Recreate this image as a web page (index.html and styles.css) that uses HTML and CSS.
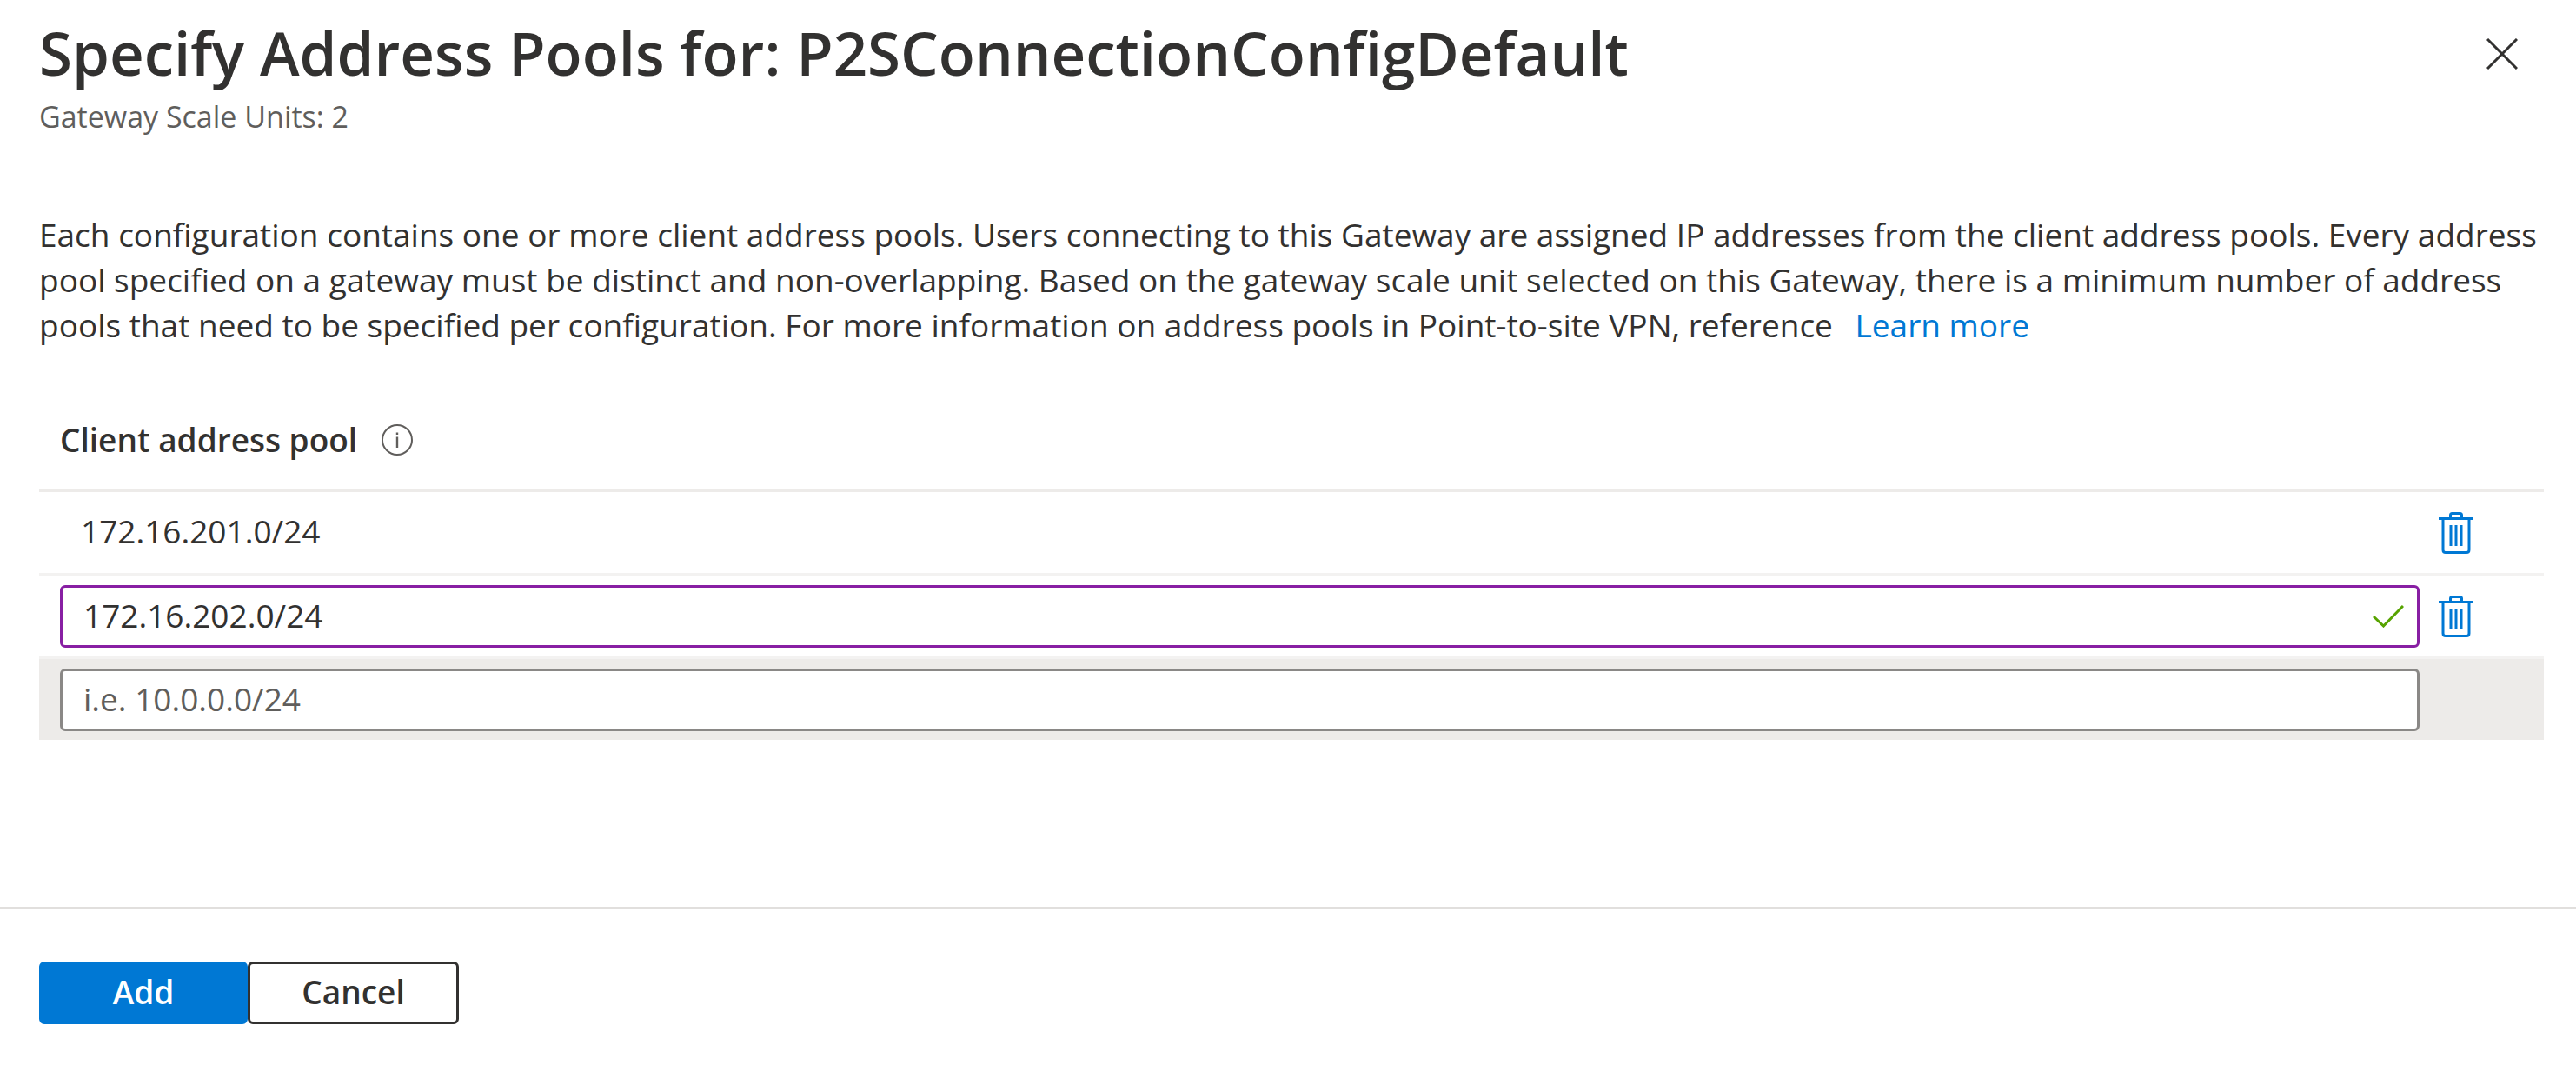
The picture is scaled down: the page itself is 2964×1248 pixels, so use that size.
FILE: index.html
```html
<!DOCTYPE html>
<html lang="en">
<head>
<meta charset="utf-8">
<meta name="viewport" content="width=device-width, initial-scale=1">
<title>Specify Address Pools</title>
<link rel="stylesheet" href="styles.css">
</head>
<body>
<div class="blade">
  <header class="blade-header">
    <div>
      <h1 class="title">Specify Address Pools for: P2SConnectionConfigDefault</h1>
      <p class="subtitle">Gateway Scale Units: 2</p>
    </div>
    <button class="icon-button" type="button" aria-label="Close">
      <svg width="36" height="36" viewBox="0 0 36 36" fill="none" stroke="#323130" stroke-width="3"><path d="M1 1L35 35M35 1L1 35"/></svg>
    </button>
  </header>

  <main class="content">
    <p class="description">Each configuration contains one or more client address pools. Users connecting to this Gateway are assigned IP addresses from the client address pools. Every address pool specified on a gateway must be distinct and non-overlapping. Based on the gateway scale unit selected on this Gateway, there is a minimum number of address pools that need to be specified per configuration. For more information on address pools in Point-to-site VPN, reference <a class="link" href="#">Learn more</a></p>

    <table class="pools">
      <thead>
        <tr>
          <th scope="col" colspan="2">
            <div class="column-head">
              <span id="pool-label">Client address pool</span>
              <button class="icon-button" type="button" aria-label="About client address pools">
                <svg width="36" height="36" viewBox="0 0 36 36" fill="none" stroke="#605e5c"><circle cx="18" cy="18" r="17" stroke-width="2"/><path d="M18 14.5V27M18 9.5V12" stroke-width="2.4"/></svg>
              </button>
            </div>
          </th>
        </tr>
      </thead>
      <tbody>
        <tr>
          <td><div class="value">172.16.201.0/24</div></td>
          <td class="action">
            <button class="icon-button" type="button" aria-label="Delete 172.16.201.0/24">
              <svg width="40" height="48" viewBox="0 0 40 48" fill="none" stroke="#0078d4" stroke-width="3"><path d="M0 7.5H40M13.5 7V3.5Q13.5 1.5 15.5 1.5H24.5Q26.5 1.5 26.5 3.5V7M5 8V43.5Q5 46.5 8 46.5H32Q35 46.5 35 43.5V8M14 15V39M20 15V39M26 15V39"/></svg>
            </button>
          </td>
        </tr>
        <tr>
          <td>
            <div class="field">
              <input class="input edited" type="text" value="172.16.202.0/24" aria-labelledby="pool-label">
              <svg class="check" width="36" height="26" viewBox="0 0 36 26" fill="none" stroke="#57a300" stroke-width="3"><path d="M1 13L12.5 24L35 1"/></svg>
            </div>
          </td>
          <td class="action">
            <button class="icon-button" type="button" aria-label="Delete 172.16.202.0/24">
              <svg width="40" height="48" viewBox="0 0 40 48" fill="none" stroke="#0078d4" stroke-width="3"><path d="M0 7.5H40M13.5 7V3.5Q13.5 1.5 15.5 1.5H24.5Q26.5 1.5 26.5 3.5V7M5 8V43.5Q5 46.5 8 46.5H32Q35 46.5 35 43.5V8M14 15V39M20 15V39M26 15V39"/></svg>
            </button>
          </td>
        </tr>
        <tr class="new-row">
          <td><div class="field"><input class="input" type="text" placeholder="i.e. 10.0.0.0/24" aria-labelledby="pool-label"></div></td>
          <td class="action"></td>
        </tr>
      </tbody>
    </table>
  </main>

  <footer class="footer">
    <button class="button primary" type="button">Add</button>
    <button class="button" type="button">Cancel</button>
  </footer>
</div>
</body>
</html>
```
FILE: styles.css
```css
*, *::before, *::after { box-sizing: border-box; }

body {
  margin: 0;
  background: #fff;
  color: #323130;
  font: 37px/52px "Segoe UI", "Open Sans", "Noto Sans", sans-serif;
}

h1, p { margin: 0; }

.blade {
  display: flex;
  flex-direction: column;
  min-height: 100vh;
}

.blade-header {
  display: flex;
  justify-content: space-between;
  align-items: flex-start;
  padding: 16px 67px 0 45px;
}

.blade-header .icon-button { margin-top: 28px; }

.title {
  font-size: 69px;
  line-height: 88px;
  font-weight: 600;
}

.subtitle {
  color: #605e5c;
  font-size: 34px;
  line-height: 60px;
}

.icon-button {
  display: flex;
  padding: 0;
  border: 0;
  background: none;
  cursor: pointer;
}

.content {
  flex: 1;
  padding: 80px 37px 60px 45px;
}

.link {
  margin-left: 16px;
  color: #0078d4;
  text-decoration: none;
}

.pools {
  width: 100%;
  margin-top: 60px;
  border-collapse: separate;
  border-spacing: 0;
}

.pools th {
  padding: 20px 24px 31px;
  border-bottom: 3px solid #edebe9;
  text-align: left;
  font-weight: 600;
}

.column-head {
  display: flex;
  align-items: center;
  gap: 28px;
}

.pools td {
  padding: 11px 0 10px 24px;
  border-bottom: 3px solid #f3f2f1;
}

.pools td.action {
  width: 143px;
  padding-left: 22px;
}

.pools .new-row td {
  border-bottom: 0;
  background: #edebe9;
}

.value { padding: 8px 24px 12px; }

.field {
  position: relative;
  display: flex;
}

.input {
  flex: 1;
  height: 72px;
  padding: 0 72px 3px 24px;
  border: 3px solid #8a8886;
  border-radius: 6px;
  background: #fff;
  color: inherit;
  font: inherit;
}

.input.edited { border-color: #881fa3; }

.input::placeholder {
  color: #605e5c;
  opacity: 1;
}

.check {
  position: absolute;
  top: 23px;
  right: 18px;
}

.footer {
  display: flex;
  padding: 60px 45px 70px;
  border-top: 3px solid #e1dfdd;
}

.button {
  min-width: 243px;
  height: 72px;
  padding: 0 24px 3px;
  border: 3px solid #323130;
  border-radius: 6px;
  background: #fff;
  color: #323130;
  font: inherit;
  font-weight: 600;
}

.button.primary {
  min-width: 240px;
  border-color: #0078d4;
  background: #0078d4;
  color: #fff;
}
```
